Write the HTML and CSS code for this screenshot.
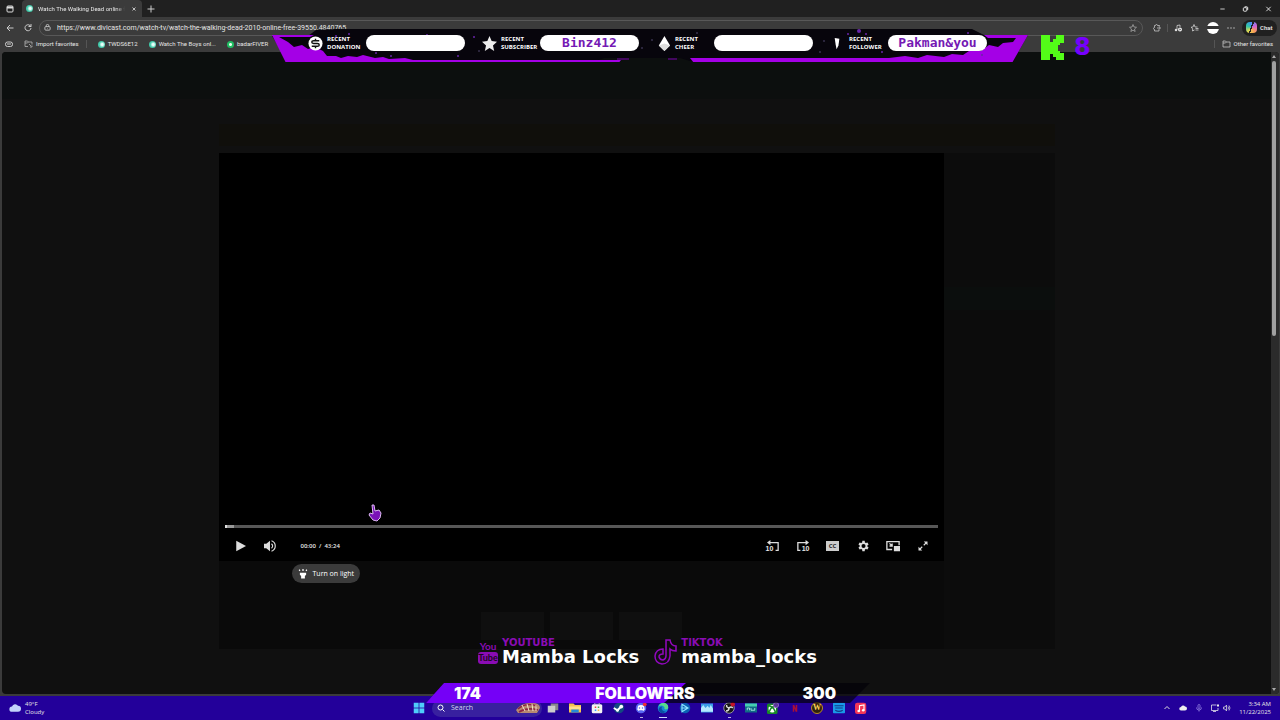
FILE: index.html
```html
<!DOCTYPE html>
<html lang="en">
<head>
<meta charset="UTF-8" />
<meta name="viewport" content="width=device-width, initial-scale=1" />
<title>Watch The Walking Dead online free</title>
<link rel="stylesheet" href="styles.css">
</head>
<body>

<!-- browser -->
<header class="browser">
  <div class="tabstrip">
    <button class="icon-btn tab-actions" aria-label="Tab actions">
      <svg viewBox="0 0 16 16"><rect x="2" y="2" width="12" height="12" rx="2" fill="none" stroke="#ddd" stroke-width="2"/><path d="M2 3h12v4H2z" fill="#ddd"/></svg>
    </button>
    <div class="tab">
      <span class="favicon"></span>
      <span class="tab-title">Watch The Walking Dead online f</span>
      <button class="icon-btn" aria-label="Close tab"><svg viewBox="0 0 16 16"><path d="M4 4l8 8M12 4l-8 8" stroke="#eee" stroke-width="2"/></svg></button>
    </div>
    <button class="icon-btn new-tab" aria-label="New tab"><svg viewBox="0 0 16 16"><path d="M8 1v14M1 8h14" stroke="#ccc" stroke-width="2"/></svg></button>
    <div class="window-buttons">
      <button class="icon-btn" aria-label="Minimize"><svg viewBox="0 0 16 16"><path d="M3 8h10" stroke="#ddd" stroke-width="2"/></svg></button>
      <button class="icon-btn" aria-label="Restore"><svg viewBox="0 0 16 16"><rect x="3" y="5" width="8" height="8" rx="2" fill="none" stroke="#fff" stroke-width="2"/><path d="M6 3h5q2 0 2 2v5" fill="none" stroke="#fff" stroke-width="2"/></svg></button>
      <button class="icon-btn" aria-label="Close"><svg viewBox="0 0 16 16"><path d="M3 3l10 10M13 3L3 13" stroke="#eee" stroke-width="2"/></svg></button>
    </div>
  </div>

  <div class="toolbar">
    <button class="icon-btn" aria-label="Back"><svg viewBox="0 0 16 16"><path d="M15 8H2M8 2L2 8l6 6" fill="none" stroke="#ccc" stroke-width="2"/></svg></button>
    <button class="icon-btn" aria-label="Refresh"><svg viewBox="0 0 16 16"><path d="M14 8a6 6 0 1 1-2-5l2 2M14 0v5H9" fill="none" stroke="#ccc" stroke-width="2"/></svg></button>
    <div class="address">
      <svg class="lock" viewBox="0 0 16 16"><rect x="2" y="6" width="12" height="8" rx="2" fill="none" stroke="#ccc" stroke-width="2"/><path d="M5 6V4a3 3 0 0 1 6 0v2" fill="none" stroke="#ccc" stroke-width="2"/><circle cx="8" cy="10" r="1" fill="#ccc"/></svg>
      <input type="text" aria-label="Address" value="https://www.divicast.com/watch-tv/watch-the-walking-dead-2010-online-free-39550.4840765">
      <button class="icon-btn" aria-label="Add to favorites"><svg viewBox="0 0 16 16"><path d="M8 1l2 5 5 .5-4 3.500 1.300 5L8 12.300 3.700 15 5 10 1 6.500 6 6z" fill="none" stroke="#aaa" stroke-width="1.500"/></svg></button>
    </div>
    <div class="tools">
      <button class="icon-btn" aria-label="Extensions"><svg viewBox="0 0 16 16"><path d="M13 5V3H9a2 2 0 0 0-4 0H3v4a2 2 0 0 0 0 4v3h9v-3M8 8h6M12 5l3 3-3 3" fill="none" stroke="#ccc" stroke-width="1.500"/></svg></button>
      <span class="divider"></span>
      <button class="icon-btn" aria-label="Media"><svg viewBox="0 0 16 16"><path d="M6 12V3l6-1v4" fill="none" stroke="#ddd" stroke-width="1.500"/><circle cx="4" cy="12" r="2.500" fill="#ddd"/><circle cx="12" cy="11" r="4" fill="#eee"/><path d="M11 9l3 2-3 2z" fill="#333"/></svg></button>
      <button class="icon-btn" aria-label="Favorites"><svg viewBox="0 0 16 16"><path d="M6 1l2 5h5M6 1L4 6l-4 .5 3.500 3L3 14l4-2M9 9h6M9 12h6" fill="none" stroke="#ddd" stroke-width="1.500"/></svg></button>
      <button class="icon-btn avatar" aria-label="Profile"></button>
      <button class="icon-btn" aria-label="Settings and more"><svg viewBox="0 0 16 16"><g fill="#bbb"><circle cx="2" cy="8" r="1.500"/><circle cx="8" cy="8" r="1.500"/><circle cx="14" cy="8" r="1.500"/></g></svg></button>
      <button class="chat"><span class="copilot"></span>Chat</button>
    </div>
  </div>

  <nav class="bookmarks" aria-label="Favorites bar">
    <button class="icon-btn essentials" aria-label="Essentials"><svg viewBox="0 0 16 16"><rect x="1" y="4" width="14" height="9" rx="4" fill="none" stroke="#ccc" stroke-width="2"/><path d="M4 8h8" stroke="#ccc" stroke-width="2"/></svg></button>
    <a href="#" class="import"><svg viewBox="0 0 16 16"><path d="M7 13H1V2h5l2 2h7v5M1 6h5l2-2M15 11v3h-4M9 8l4 4" fill="none" stroke="#bbb" stroke-width="1.500"/></svg>Import favorites</a>
    <a href="#"><span class="favicon"></span>TWDS6E12</a>
    <a href="#"><span class="favicon"></span>Watch The Boys onl...</a>
    <a href="#"><span class="favicon green"></span>badarFIVER</a>
    <a href="#" aria-label="Favorite"><span class="favicon green"></span></a>
    <a href="#" class="other"><svg viewBox="0 0 16 16"><path d="M1 14V2h5l2 2h7v10zM1 6h5l2-2" fill="none" stroke="#ccc" stroke-width="1.500"/></svg>Other favorites</a>
  </nav>
</header>

<div class="viewport">
  <main class="site">
    <div class="site-header"></div>
    <div class="container">
      <div class="notice"></div>
      <div class="watch">
        <section class="player-column">
          <div class="player">
            <input class="seek" type="range" min="0" max="100" value="0" aria-label="Seek">
            <div class="controls">
              <button aria-label="Play"><svg viewBox="0 0 16 16"><path d="M3 1l13 7-13 7z" fill="#ddd"/></svg></button>
              <button aria-label="Volume"><svg viewBox="0 0 16 16"><path d="M0 5h3l5-4v14l-5-4H0z" fill="#ddd"/><path d="M10 5q3 3 0 6M10 1q5 2 5 7t-5 7" fill="none" stroke="#ddd" stroke-width="1.500"/></svg></button>
              <span class="time">00:00&nbsp; /&nbsp; 43:24</span>
              <div class="controls-right">
                <button class="skip back" aria-label="Rewind 10 seconds"><svg viewBox="0 0 14 14"><path d="M3 3h10v9h-3" fill="none" stroke="#ddd" stroke-width="1.500"/><path d="M0 3l4-3v6z" fill="#ddd"/></svg><span>10</span></button>
                <button class="skip" aria-label="Forward 10 seconds"><svg viewBox="0 0 14 14"><path d="M11 3H1v9h3" fill="none" stroke="#ddd" stroke-width="1.500"/><path d="M14 3l-4-3v6z" fill="#ddd"/></svg><span>10</span></button>
                <button aria-label="Captions"><span class="cc">CC</span></button>
                <button aria-label="Settings"><svg viewBox="0 0 24 24"><path fill="#ddd" fill-rule="evenodd" d="M19.400 13l.1-1-.1-1 2.200-1.700-2-3.500-2.600 1a8 8 0 0 0-1.700-1L14.900 3h-4l-.4 2.800a8 8 0 0 0-1.700 1l-2.600-1-2 3.500L6.400 11l-.1 1 .1 1-2.200 1.700 2 3.500 2.600-1 1.700 1 .4 2.800h4l.4-2.800 1.700-1 2.600 1 2-3.500zM12.900 15.500a3.500 3.500 0 1 1 0-7 3.500 3.500 0 0 1 0 7z"/></svg></button>
                <button aria-label="Picture in picture"><svg viewBox="0 0 16 16"><path d="M7 12H1V3h14v4M4 5l3 3M7 5v3H4" fill="none" stroke="#ddd" stroke-width="1.500"/><rect x="9" y="8" width="7" height="6" fill="#ddd"/></svg></button>
                <button aria-label="Fullscreen"><svg viewBox="0 0 16 16"><path d="M9 7l4-4M7 9l-4 4" stroke="#ddd" stroke-width="1.500"/><path d="M9 2h5v5zM2 9v5h5z" fill="#ddd"/></svg></button>
              </div>
            </div>
          </div>
          <div class="actions">
            <button class="light"><svg viewBox="0 0 16 16"><path d="M3 6h10v3l-2 2v4H5v-4L3 9z" fill="#fff"/><path d="M2 1l1 2M8 0v3M14 1l-1 2" stroke="#fff" stroke-width="2"/></svg>Turn on light</button>
          </div>
          <div class="servers"><span></span><span></span><span></span></div>
        </section>
        <aside class="episodes"><div class="episode-current"></div></aside>
      </div>
    </div>
  </main>
  <div class="scrollbar" aria-hidden="true">
    <i class="arrow-up"></i>
    <div class="track"><div class="thumb"></div></div>
    <i class="arrow-down"></i>
  </div>
</div>

<!-- taskbar -->
<footer class="taskbar">
  <div class="weather">
    <svg viewBox="0 0 16 12"><path d="M4 11a3.500 3.500 0 0 1 0-7 4.500 4.500 0 0 1 8-1 4 4 0 0 1 0 8z" fill="#c3d2fb"/></svg>
    <div>49°F<br>Cloudy</div>
  </div>
  <div class="apps">
    <button aria-label="Start"><svg viewBox="0 0 16 16"><g fill="#4fcdfa"><rect x="1" y="1" width="6.500" height="6.500"/><rect x="8.500" y="1" width="6.500" height="6.500"/><rect x="1" y="8.500" width="6.500" height="6.500"/><rect x="8.500" y="8.500" width="6.500" height="6.500"/></g></svg></button>
    <label class="search">
      <svg class="glass" viewBox="0 0 16 16"><circle cx="7" cy="7" r="5" fill="none" stroke="#fff" stroke-width="2"/><path d="M11 11l4 4" stroke="#fff" stroke-width="2"/></svg>
      <input type="text" placeholder="Search" aria-label="Search">
      <svg class="doodle" viewBox="0 0 24 12"><path d="M0 8Q6 0 16 1q8 0 8 5l-3 5H2z" fill="#b78a71"/><path d="M2 7q8-7 19-3M3 10q8-5 19-2" fill="none" stroke="#8d2743" stroke-width="1.500"/><path d="M6 3l3 6M11 2l2 7M16 2l1 7M20 3v6" stroke="#f3e6c8"/></svg>
    </label>
    <button aria-label="Task view"><svg viewBox="0 0 16 16"><rect x="5" y="2" width="10" height="9" fill="#888"/><rect x="1" y="5" width="10" height="9" fill="#ccc"/></svg></button>
    <button aria-label="File Explorer"><svg viewBox="0 0 16 16"><path d="M0 2h6l2 2h8v10H0z" fill="#f5c14e"/><path d="M0 6h16v4H0z" fill="#ffe08b"/><path d="M3 10h10v4H3z" fill="#2589d8"/></svg></button>
    <button aria-label="Store"><svg viewBox="0 0 16 16"><rect x="1" y="3" width="14" height="12" rx="2" fill="#f4f4f4"/><path d="M5 3V1h6v2" fill="none" stroke="#ddd"/><path d="M5 6h2v2H5z" fill="#e44"/><path d="M9 6h2v2H9z" fill="#4a4"/><path d="M5 10h2v2H5z" fill="#39f"/><path d="M9 10h2v2H9z" fill="#fb3"/></svg></button>
    <button aria-label="Steam"><svg viewBox="0 0 16 16"><circle cx="8" cy="8" r="7" fill="#124a80"/><circle cx="11" cy="6" r="2.500" fill="#fff"/><path d="M1 8l5 3 4-4" fill="none" stroke="#fff" stroke-width="2.500"/><circle cx="6" cy="11" r="2" fill="#fff"/></svg></button>
    <button class="running" aria-label="Discord"><svg viewBox="0 0 16 16"><circle cx="8" cy="8" r="7" fill="#5865f2"/><path d="M4 5q4-2 8 0l1 5-2 2-1-1H6l-1 1-2-2z" fill="#fff"/><circle cx="6" cy="8" r="1" fill="#5865f2"/><circle cx="10" cy="8" r="1" fill="#5865f2"/><circle cx="13" cy="3" r="2.500" fill="#e33"/></svg></button>
    <button class="running active" aria-label="Edge"><svg viewBox="0 0 16 16"><circle cx="8" cy="8" r="7" fill="#1688d6"/><path d="M2 6Q4 1 9 1q6 1 6 6 0 3-4 3-2-1-1-3Q7 3 2 6z" fill="#56dc8c"/><path d="M7 6q-3 5 5 7-7 5-10-3 1-4 5-4z" fill="#0b4ea4"/></svg></button>
    <button aria-label="Battle.net"><svg viewBox="0 0 16 16"><circle cx="8" cy="8" r="7" fill="#0b5fb4"/><path d="M4 3l8 5-8 5zM3 8h9" fill="none" stroke="#8fe4ff" stroke-width="1.500"/></svg></button>
    <button aria-label="Photos"><svg viewBox="0 0 16 16"><path d="M0 2h16v12H0z" fill="#3a9de6"/><path d="M0 13V8l3-4 3 4 3-3 2 3 2-4 3 5v4z" fill="#b4e8ff"/></svg></button>
    <button class="running" aria-label="OBS"><svg viewBox="0 0 16 16"><circle cx="8" cy="8" r="7" fill="#161616" stroke="#bbb"/><path d="M8 8q-4-1-3-4M8 8q3-3 5 0M8 8q0 4-4 4" fill="none" stroke="#ddd" stroke-width="2"/><circle cx="13" cy="3" r="3" fill="#c51527"/></svg></button>
    <button aria-label="Streaming"><svg viewBox="0 0 16 16"><rect x="0" y="2" width="16" height="12" fill="#116b86"/><path d="M0 2h16v4H0z" fill="#45cfaf"/><path d="M3 11V8h3v3M8 8v3h5V8" fill="none" stroke="#c4fff2"/></svg></button>
    <button aria-label="Xbox"><svg viewBox="0 0 16 16"><rect x="0" y="2" width="14" height="14" rx="2" fill="#178a26"/><circle cx="7" cy="9" r="5" fill="#fff"/><path d="M3 13q2-5 4-6 2 1 4 6M3 5l4 2 4-2" fill="none" stroke="#178a26" stroke-width="2"/><circle cx="12" cy="4" r="3.500" fill="#5c3999" stroke="#9876ce"/></svg></button>
    <button aria-label="Netflix"><svg viewBox="0 0 16 16"><path d="M6 4v9M10 4v9M6 4l4 9" stroke="#a80f35" stroke-width="2"/></svg></button>
    <button class="wow" aria-label="World of Warcraft"><span>W</span></button>
    <button aria-label="Prime Video"><svg viewBox="0 0 16 16"><rect x="0" y="1" width="16" height="14" rx="1" fill="#1999e8"/><path d="M2 5h12M3 8h10M3 11q5 3 10 0" fill="none" stroke="#113c87" stroke-width="1.500"/></svg></button>
    <button aria-label="Music"><svg viewBox="0 0 16 16"><rect x="0" y="1" width="15" height="15" rx="3" fill="#f43657"/><path d="M6 12V5l6-1v7" fill="none" stroke="#fff" stroke-width="1.500"/><circle cx="5" cy="12" r="1.800" fill="#fff"/><circle cx="11" cy="11" r="1.800" fill="#fff"/></svg></button>
  </div>
  <div class="tray">
    <svg viewBox="0 0 16 16"><path d="M3 10l5-5 5 5" fill="none" stroke="#ddd" stroke-width="2"/></svg>
    <svg viewBox="0 0 16 16"><path d="M4 13a3.500 3.500 0 0 1 0-7 4.500 4.500 0 0 1 8-1 4 4 0 0 1 0 8z" fill="#eee"/></svg>
    <svg viewBox="0 0 16 16"><rect x="6" y="1" width="4" height="8" rx="2" fill="none" stroke="#9f8fe8" stroke-width="1.500"/><path d="M3 7q0 5 5 5t5-5M8 12v3" fill="none" stroke="#9f8fe8" stroke-width="1.500"/></svg>
    <span class="net">
      <svg viewBox="0 0 16 16"><path d="M11 2H1v11h13V8M4 15h6" fill="none" stroke="#eee" stroke-width="1.500"/><path d="M12 1h4v4h-4z" fill="#eee"/></svg>
      <svg viewBox="0 0 16 16"><path d="M1 6h3l3-4v12l-3-4H1zM10 5q2 3 0 6M12 3q4 5 0 10" fill="none" stroke="#ddd" stroke-width="1.500"/></svg>
    </span>
    <div class="clock">3:34 AM<br>11/22/2025</div>
  </div>
</footer>

<!-- stream overlay -->
<div class="overlay alerts">
  <svg class="alerts-bg" viewBox="0 0 756 34" aria-hidden="true">
    <path d="M0 8h36l8-6 20-1h636l12 6h44l-15 26H418l-10-3H332l-8 3H15z" fill="#07050c"/>
    <path d="M0 7h42l-4 2H7l9 5 6 5 8-2 6 4 7-2 8 4 4 5 9 0 5 2 7-2 9 1 6-2 12 3 8-1 6 2 16-1 8 2h208l-4 5H15z" fill="#a400e6"/>
    <path d="M756 7h-44l4 3h28l-3 4-10 1-5 4-9-2-8 6-9-2-9 6-11-1-8 3-17-2-9 3-13-2-16 2H418l4 5h318z" fill="#a400e6"/>
    <path d="M345 31h12M396 31h9" stroke="#7900ae"/>
    <g fill="#6824a9">
      <circle cx="64" cy="8" r="1"/><circle cx="77" cy="6" r="1"/><circle cx="104" cy="25" r="1"/><circle cx="119" cy="28" r="1"/><circle cx="155" cy="7" r="1"/><circle cx="186" cy="28" r="1"/>
      <circle cx="202" cy="9" r="1"/><circle cx="587" cy="3" r="2"/><circle cx="594" cy="6" r="1"/><circle cx="576" cy="6" r="1"/><circle cx="610" cy="24" r="1"/><circle cx="696" cy="5" r="1"/><circle cx="710" cy="27" r="1"/>
    </g>
    <g fill="#37304d">
      <circle cx="207" cy="23" r="1"/><circle cx="380" cy="12" r="1"/><circle cx="370" cy="20" r="1"/><circle cx="425" cy="5" r="1"/><circle cx="548" cy="24" r="1"/><circle cx="552" cy="13" r="1"/>
    </g>
  </svg>
  <div class="alerts-row">
    <div class="alert">
      <svg viewBox="0 0 16 16"><circle cx="8" cy="8" r="7.500" fill="#fff"/><path d="M12 5H6q-2 0-2 1.500T6 8h4q2 0 2 1.500T10 11H4M8 3v2M8 11v2" fill="none" stroke="#111" stroke-width="1.500"/></svg>
      <span>RECENT<br>DONATION</span><b></b>
    </div>
    <div class="alert">
      <svg viewBox="0 0 16 16"><path d="M8 0l2.300 5.400 5.700.6-4.300 4 1.300 6-5-3.200L3 16l1.300-6L0 6l5.700-.6z" fill="#eee"/></svg>
      <span>RECENT<br>SUBSCRIBER</span><b>Binz412</b>
    </div>
    <div class="alert">
      <svg viewBox="0 0 16 16"><path d="M9 0l6 10-6 6-6-6z" fill="#fff"/><path d="M3 10l6-2 6 2-6 6z" fill="#ddd"/></svg>
      <span>RECENT<br>CHEER</span><b></b>
    </div>
    <div class="alert">
      <svg viewBox="0 0 16 16"><path d="M5 2l5 1-1 7-2 4-1-5z" fill="#fff"/></svg>
      <span>RECENT<br>FOLLOWER</span><b>Pakman&amp;you</b>
    </div>
  </div>
</div>

<div class="overlay kick">
  <svg viewBox="0 0 24 26" aria-hidden="true"><g fill="#53fc18"><rect width="9" height="25"/><rect x="8" y="7" width="5" height="12"/><rect x="12" y="4" width="5" height="18"/><rect x="15" width="8" height="8"/><rect x="15" y="6" width="4" height="4"/><rect x="15" y="16" width="4" height="4"/><rect x="15" y="18" width="8" height="7"/></g></svg>
  <span>8</span>
</div>

<div class="overlay socials">
  <div class="social">
    <div class="yt"><span>You</span><span class="tube">Tube</span></div>
    <div><small>YOUTUBE</small><strong>Mamba Locks</strong></div>
  </div>
  <div class="social">
    <svg viewBox="0 0 24 28" aria-hidden="true"><path d="M13 2h4q1 6 6 6v5q-4 0-6-2v7q-1 8-8 8-7-1-7-8 1-7 8-7v5q-4 0-4 3 1 3 4 3 3-1 3-4z" fill="none" stroke="#9208be" stroke-width="1.500"/></svg>
    <div><small>TIKTOK</small><strong>mamba_locks</strong></div>
  </div>
</div>

<div class="overlay goal">
  <svg viewBox="0 0 444 20" aria-hidden="true"><path d="M18 0h426l-20 20H0z" fill="#030208" fill-opacity=".7"/><path d="M18 0h242l-22 20H0z" fill="#7500f7"/></svg>
  <span class="goal-now">174</span><span>FOLLOWERS</span><span class="goal-max">300</span>
</div>

<svg class="cursor" viewBox="0 0 14 18" aria-hidden="true"><path d="M4 1h2l1 6 4-1 2 3-1 5-3 3-4-1-4-5 1-2 3 1z" fill="#7a12b8" stroke="#dcb8f2"/></svg>

</body>
</html>
```
FILE: styles.css
```css
* {
  box-sizing: border-box;
}
body {
  margin: 0;
  height: 100vh;
  display: flex;
  flex-direction: column;
  position: relative;
  overflow: hidden;
  background: #3b3b3b;
  color: #e6e6e6;
  font-family: "Open Sans", "Noto Sans", sans-serif;
  font-size: 6px;
  line-height: 8px;
}
button, input {
  font: inherit;
  color: inherit;
  background: none;
  border: 0;
  padding: 0;
  margin: 0;
  outline: 0;
}
button {
  cursor: pointer;
}
a {
  color: inherit;
  text-decoration: none;
}
svg {
  display: block;
  flex: none;
}

/* browser */
.browser {
  font-family: Roboto, "Open Sans", sans-serif;
}
.icon-btn {
  display: flex;
  align-items: center;
  justify-content: center;
  width: 8px;
  height: 8px;
  flex: none;
}
.icon-btn svg {
  width: 8px;
  height: 8px;
}
.favicon {
  width: 7px;
  height: 7px;
  border-radius: 50%;
  flex: none;
  background: radial-gradient(circle at 60% 50%, #e9fffa 1px, #3fc9a9 3px);
}
.favicon.green {
  background: radial-gradient(circle, #e3ffec 1px, #1fbd62 2px);
}
.tabstrip {
  display: flex;
  align-items: center;
  height: 17px;
  padding-left: 6px;
  background: #202020;
}
.tab {
  display: flex;
  align-items: center;
  gap: 5px;
  width: 120px;
  height: 17px;
  margin: 0 5px 0 8px;
  padding: 0 4px;
  border-radius: 4px 4px 0 0;
  background: #3b3b3b;
}
.tab-title {
  flex: 1;
  white-space: nowrap;
  mask-image: linear-gradient(to right, #000 90%, transparent);
}
.tab .icon-btn svg {
  width: 6px;
}
.window-buttons {
  display: flex;
  gap: 15px;
  margin-left: auto;
  padding-right: 8px;
}
.window-buttons svg {
  width: 7px;
}
.toolbar {
  display: flex;
  align-items: center;
  gap: 10px;
  height: 21px;
  padding: 0 3px 0 6px;
}
.address {
  flex: 1;
  display: flex;
  align-items: center;
  gap: 6px;
  height: 16px;
  margin-left: -3px;
  padding: 0 5px 0 4px;
  border: 1px solid #585858;
  border-radius: 8px;
  font-size: 7px;
}
.address input {
  flex: 1;
  min-width: 0;
}
.lock {
  width: 7px;
  height: 7px;
}
.tools {
  display: flex;
  align-items: center;
  gap: 9px;
}
.divider {
  width: 1px;
  height: 8px;
  margin: 0 -3px;
  background: #555;
}
.avatar {
  width: 12px;
  height: 12px;
  margin: 0 -1px;
  border-radius: 50%;
  background: linear-gradient(#fff 4px, #333 4px, #333 7px, #fff 7px);
}
.chat {
  display: flex;
  align-items: center;
  gap: 3px;
  width: 35px;
  height: 16px;
  margin-left: -2px;
  padding-left: 4px;
  border-radius: 8px;
  background: #202020;
  font-weight: 600;
}
.copilot {
  width: 11px;
  height: 11px;
  border-radius: 4px;
  background: linear-gradient(110deg, transparent 44%, #222 44%, #222 54%, transparent 54%), conic-gradient(#5a8cf8, #d45fd1, #f99c5b, #e8d94c, #33c5a7, #3a91f5);
}
.bookmarks {
  display: flex;
  align-items: center;
  gap: 11px;
  height: 14px;
  padding: 0 7px 2px 5px;
  white-space: nowrap;
}
.bookmarks a {
  display: flex;
  align-items: center;
  gap: 3px;
}
.bookmarks a svg {
  width: 9px;
  height: 8px;
}
.bookmarks .import {
  padding-right: 7px;
  border-right: 1px solid #555;
}
.bookmarks .other {
  margin-left: auto;
  padding-left: 7px;
  border-left: 1px solid #555;
}

/* page */
.viewport {
  flex: 1;
  display: flex;
  min-height: 0;
  margin: 0 1px 2px 2px;
  border-radius: 4px;
  overflow: hidden;
  background: #101010;
}
.site {
  flex: 1;
}
.site-header {
  height: 47px;
  background: #0c0f0e;
}
.container {
  max-width: 836px;
  margin: 25px auto 0;
}
.notice {
  height: 22px;
  background: #100f0b;
}
.watch {
  display: grid;
  grid-template-columns: 1fr 111px;
  margin-top: 7px;
  background: #0a0a0a;
}
.player {
  display: flex;
  flex-direction: column;
  justify-content: flex-end;
  aspect-ratio: 725 / 408;
  padding: 0 6px 5px;
  background: #000;
}
.seek {
  appearance: none;
  width: 100%;
  height: 3px;
  background: linear-gradient(to right, #999 9px, #575757 9px);
}
.seek::-webkit-slider-thumb {
  appearance: none;
  width: 2px;
  height: 3px;
  background: #ddd;
}
.controls {
  display: flex;
  align-items: center;
  gap: 16px;
  height: 20px;
  margin-top: 8px;
  padding: 0 8px;
}
.controls button {
  width: 14px;
  height: 14px;
  display: flex;
  align-items: center;
  justify-content: center;
}
.controls svg {
  width: 12px;
  height: 12px;
}
.time {
  margin-left: 8px;
  font-weight: 600;
}
.controls-right {
  display: flex;
  gap: 16px;
  margin-left: auto;
}
.controls-right button[aria-label="Settings"] svg,
.controls-right button[aria-label="Picture in picture"] svg {
  width: 14px;
  height: 14px;
}
.controls .skip {
  position: relative;
}
.skip span {
  position: absolute;
  right: 0;
  bottom: 0;
  background: #000;
  font: bold 7px/8px "Liberation Sans", sans-serif;
}
.skip.back span {
  right: auto;
  left: 0;
}
.cc {
  width: 13px;
  height: 10px;
  background: #ccc;
  color: #222;
  font-weight: 700;
  line-height: 10px;
}
.actions {
  padding: 3px 0 0 73px;
}
.light {
  display: flex;
  align-items: center;
  gap: 5px;
  height: 19px;
  padding: 0 6px;
  border-radius: 10px;
  background: #3b3b3b;
  color: #fff;
  font-size: 7px;
}
.light svg {
  width: 10px;
  height: 10px;
}
.servers {
  display: flex;
  justify-content: center;
  gap: 6px;
  padding: 29px 0 9px;
}
.servers span {
  width: 63px;
  height: 28px;
  background: #0f0f0f;
}
.episodes {
  padding-top: 134px;
  background: #0c0c0c;
}
.episode-current {
  height: 23px;
  background: #0b0e0d;
}
.scrollbar {
  display: flex;
  flex-direction: column;
  align-items: center;
  width: 8px;
  padding: 3px 2px 3px 0;
  background: #2b2b2b;
}
.track {
  flex: 1;
  width: 4px;
  padding: 3px 0;
}
.thumb {
  height: 44%;
  border-radius: 2px;
  background: #a0a0a0;
}
.arrow-up, .arrow-down {
  border: 2px solid transparent;
  border-top-width: 0;
  border-bottom: 3px solid #aaa;
}
.arrow-down {
  transform: rotate(180deg);
}

/* taskbar */
.taskbar {
  display: grid;
  grid-template-columns: 1fr auto 1fr;
  align-items: center;
  height: 24px;
  background: #23009a;
}
.weather {
  display: flex;
  align-items: center;
  gap: 4px;
  padding-left: 9px;
}
.weather svg {
  width: 12px;
  height: 10px;
}
.apps {
  display: flex;
  align-items: center;
}
.apps button {
  position: relative;
  display: flex;
  align-items: center;
  justify-content: center;
  width: 22px;
  height: 24px;
}
.apps button svg {
  width: 12px;
  height: 12px;
}
.apps .running::after {
  content: "";
  position: absolute;
  bottom: 2px;
  width: 3px;
  height: 1px;
  background: #b9b0e0;
}
.apps .active::after {
  width: 8px;
  background: #c9d8ff;
}
.search {
  display: flex;
  align-items: center;
  gap: 6px;
  width: 110px;
  height: 17px;
  margin: 0 0 0 2px;
  padding: 0 2px 0 5px;
  border-radius: 9px;
  background: #38209f;
}
.search input {
  flex: 1;
  min-width: 0;
  font-size: 7px;
}
.search input::placeholder {
  color: #d9d4f0;
}
.glass {
  width: 8px;
  height: 8px;
}
.doodle {
  width: 24px;
  height: 12px;
}
.wow span {
  width: 12px;
  border: 1px solid #b88b28;
  border-radius: 50%;
  background: #30220d;
  color: #ffd35a;
  font: bold 8px/10px "Liberation Serif", serif;
}
.tray {
  display: flex;
  align-items: center;
  justify-content: flex-end;
  gap: 8px;
  padding-right: 9px;
}
.tray svg {
  width: 8px;
  height: 8px;
}
.net {
  display: flex;
  gap: 4px;
}
.clock {
  text-align: right;
}

/* stream overlay */
.overlay {
  position: absolute;
  left: 50%;
  pointer-events: none;
}
.alerts {
  top: 28px;
  width: 756px;
  margin-left: -368px;
}
.alerts-bg {
  width: 756px;
  height: 34px;
}
.alerts-row {
  position: absolute;
  top: 7px;
  left: 36px;
  display: flex;
  gap: 17px;
}
.alert {
  display: grid;
  grid-template-columns: 16px 36px 99px;
  gap: 3px;
  align-items: center;
  height: 16px;
  color: #fff;
  font: bold 6px/8px "Open Sans", sans-serif;
}
.alert svg {
  width: 15px;
  height: 15px;
}
.alert b {
  height: 16px;
  border-radius: 8px;
  background: #fff;
  color: #7519b4;
  text-align: center;
  font: bold 13px/15px "DejaVu Sans Mono", monospace;
}
.kick {
  top: 35px;
  display: flex;
  gap: 9px;
  margin-left: 401px;
  color: #7600ff;
  font: bold 24px/24px "DejaVu Sans", sans-serif;
}
.kick svg {
  width: 24px;
  height: 26px;
}
.socials {
  top: 638px;
  display: flex;
  gap: 14px;
  margin-left: -162px;
}
.social {
  display: flex;
  align-items: center;
  gap: 4px;
  color: #fff;
  font: bold 18px/18px "DejaVu Sans", sans-serif;
}
.social small, .social strong {
  display: block;
}
.social small {
  color: #8a0cb4;
  font-size: 10px;
  line-height: 10px;
}
.social > svg {
  width: 24px;
  height: 28px;
}
.yt {
  width: 20px;
  color: #8a0cb4;
  font: bold 10px/12px "Liberation Sans Narrow", Lato, sans-serif;
  text-align: center;
}
.yt span {
  display: block;
}
.yt .tube {
  border-radius: 3px;
  background: #8a0cb4;
  color: #1b0524;
  font-size: 9px;
}
.goal {
  top: 683px;
  width: 444px;
  height: 20px;
  margin-left: -214px;
  display: grid;
  grid-template-columns: 1fr auto 1fr;
  align-items: center;
  padding: 0 34px 0 28px;
  color: #fff;
  font: 900 16px/20px Inter, sans-serif;
}
.goal svg {
  position: absolute;
  width: 444px;
  height: 20px;
}
.goal span {
  position: relative;
}
.goal-max {
  text-align: right;
}
.cursor {
  position: absolute;
  top: 504px;
  left: 368px;
  width: 14px;
  height: 18px;
  pointer-events: none;
}
```
